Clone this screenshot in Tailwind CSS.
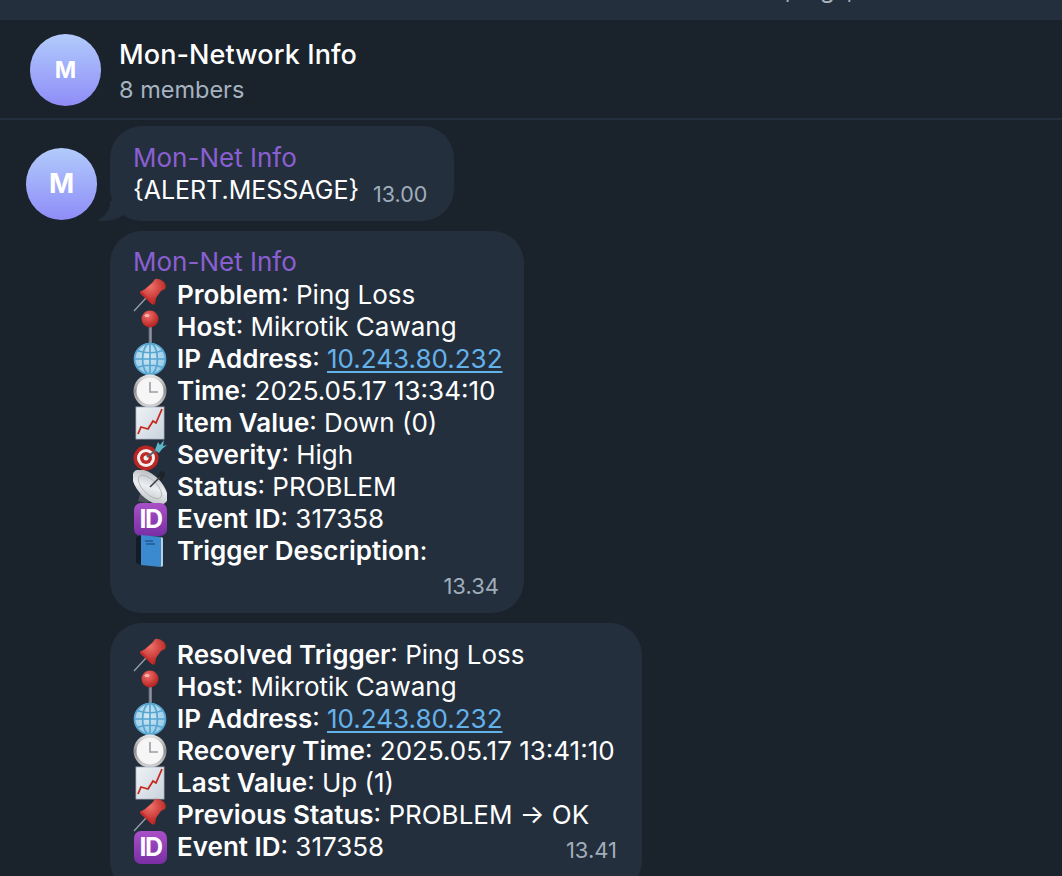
<!DOCTYPE html>
<html lang="en">
<head>
<meta charset="UTF-8" />
<title>Mon-Network Info</title>
<script src="https://cdn.jsdelivr.net/npm/@tailwindcss/browser@4"></script>
</head>
<body class="bg-[#1a222b] text-white font-['Inter',sans-serif] h-[876px] overflow-hidden">

<!-- shared emoji art -->
<svg width="0" height="0" class="absolute">
  <defs>
    <radialGradient id="red" cx="40%" cy="30%" r="70%"><stop offset="0" stop-color="#f2706a"/><stop offset="1" stop-color="#b3201f"/></radialGradient>
    <linearGradient id="steel" x1="0" x2="1"><stop offset="0" stop-color="#5f6670"/><stop offset="1" stop-color="#aab0b8"/></linearGradient>
    <radialGradient id="blue" cx="45%" cy="40%" r="65%"><stop offset="0" stop-color="#d5eaf6"/><stop offset="1" stop-color="#8cc4e4"/></radialGradient>
    <linearGradient id="rim" x1="0" x2="0" y1="0" y2="1"><stop offset="0" stop-color="#e8e8e8"/><stop offset=".5" stop-color="#8f8f8f"/><stop offset="1" stop-color="#d8d8d8"/></linearGradient>
    <linearGradient id="paper" x1="0" x2="1" y1="0" y2="1"><stop offset="0" stop-color="#eef2f6"/><stop offset="1" stop-color="#c9d3dc"/></linearGradient>
    <linearGradient id="dishg" x1="0" x2="1" y1="0" y2="1"><stop offset="0" stop-color="#a8adb3"/><stop offset=".5" stop-color="#eceef0"/><stop offset="1" stop-color="#b4b8bc"/></linearGradient>

    <symbol id="e-pushpin" viewBox="0 0 34 34">
      <path d="M1 33 L13 20" stroke="#9aa3ad" stroke-width="1.2"/>
      <path d="M7 14 L12 11 L19 5 L22 1 Q26 0 31 4 Q34 8 32 11 L28 13 L23 20 L22 26 Q21 27 19 26 L8 16 Z" fill="url(#red)"/>
      <path d="M8 16 Q6 14 8 13 L20 24 Q21 27 19 26 Z" fill="#c92d2b"/>
    </symbol>

    <symbol id="e-roundpin" viewBox="0 0 34 34">
      <rect x="15.6" y="14" width="3" height="20" fill="url(#steel)"/>
      <circle cx="17" cy="9" r="8.5" fill="url(#red)"/>
      <ellipse cx="14" cy="5.5" rx="2.6" ry="1.6" fill="#f9b6b0"/>
    </symbol>

    <symbol id="e-globe" viewBox="0 0 34 34">
      <circle cx="17" cy="17" r="16" fill="url(#blue)"/>
      <g fill="none" stroke="#55a5d0" stroke-width="1.7">
        <circle cx="17" cy="17" r="15.5"/>
        <ellipse cx="17" cy="17" rx="7.5" ry="15.5"/>
        <path d="M17 1.5V32.5M1.5 17H32.5M4 8.5Q17 13 30 8.5M4 25.5Q17 21 30 25.5"/>
      </g>
    </symbol>

    <symbol id="e-clock" viewBox="0 0 34 34">
      <circle cx="17" cy="17" r="16.5" fill="url(#rim)"/>
      <circle cx="17" cy="17" r="13.5" fill="#f6f6f6"/>
      <path d="M17 8V18H25" fill="none" stroke="#9a9ea3" stroke-width="1.6"/>
    </symbol>

    <symbol id="e-chart" viewBox="0 0 34 34">
      <rect x="3" y="1" width="28" height="32" fill="url(#paper)" stroke="#aeb8c2" stroke-width=".8"/>
      <path d="M5 28 L8 21 L15 23 L20 15 L23 17 L29 3" fill="none" stroke="#c5281f" stroke-width="1.8"/>
    </symbol>

    <symbol id="e-target" viewBox="0 0 34 34">
      <circle cx="13" cy="20" r="12.5" fill="#b92624"/>
      <circle cx="13" cy="20" r="9" fill="#f4f1ee"/>
      <circle cx="13" cy="20" r="6" fill="#c22a28"/>
      <circle cx="13" cy="20" r="2.5" fill="#f4f1ee"/>
      <path d="M14 19 L25 11" stroke="#56616b" stroke-width="2"/>
      <path d="M22 12 L25 4 L27 7 L31 2 L30 8 L34 7 L29 11 L26 15 Z" fill="#5db7c7"/>
    </symbol>

    <symbol id="e-dish" viewBox="0 0 34 34">
      <path d="M8 20 L5 31 L13 33 L22 29 L18 22 Z" fill="#4a5159"/>
      <path d="M18 16 L27 7" stroke="#3a4047" stroke-width="1.8"/>
      <path d="M24 7 L28 1 L32 2 L32 5 L28 11 Z" fill="#1f2328"/>
      <ellipse cx="17" cy="17" rx="22" ry="11.5" transform="rotate(45 17 17)" fill="url(#dishg)"/>
      <ellipse cx="17" cy="17" rx="15" ry="7" transform="rotate(45 17 17)" fill="none" stroke="#a3a8ae" stroke-width=".7"/>
      <path d="M17 17 L27 7" stroke="#3a4047" stroke-width="1.6"/>
    </symbol>

    <symbol id="e-book" viewBox="0 0 34 34">
      <path d="M3 3 L8 1 V31 L3 29 Z" fill="#141c26"/>
      <path d="M8 1 L28 3 V33 L8 31 Z" fill="#3b8ad0"/>
      <path d="M28 3 L30 4 V32 L28 33 Z" fill="#b9cfe2"/>
      <path d="M12 7H20M13 10H22" stroke="#1f5a92" stroke-width="1.3"/>
    </symbol>
  </defs>
</svg>

<!-- strip of the window above, its text cut off at the edge -->
<div class="h-5 bg-[#242f3d] overflow-hidden relative">
  <div class="absolute left-[785px] top-[-22px] flex text-[24px] leading-[24px] text-[#a9b3be]">
    <span>,</span><span class="ml-[28px]">g</span><span class="ml-[12px]">,</span>
  </div>
</div>

<!-- chat header -->
<header class="h-[100px] flex items-center pl-[30px] gap-[18px] border-b-2 border-[#242f3d]">
  <div class="w-[71px] h-[72px] mt-[2px] rounded-full bg-gradient-to-b from-[#b2cbfb] to-[#8f8cf7] flex items-center justify-center font-bold text-[23px]">M</div>
  <div class="pt-[5px]">
    <div class="text-[27px] leading-[35px] font-medium tracking-[0.1px]">Mon-Network Info</div>
    <div class="text-[23.5px] leading-[35px] text-[#a6b3c0]">8 members</div>
  </div>
</header>

<main class="pt-[6px] flex flex-col gap-[10px]">
  <!-- first message with avatar and tail -->
  <div class="flex items-end pl-[26px] gap-[13px]">
    <div class="w-[71px] h-[72px] mb-px rounded-full bg-gradient-to-b from-[#b2cbfb] to-[#8f8cf7] flex items-center justify-center font-bold text-[27px]">M</div>
    <div class="relative w-[344px] h-[95px] bg-[#242f3d] rounded-[32px] pt-[15px] pl-[23px]">
      <svg class="absolute left-[-13px] bottom-0" width="34" height="20" viewBox="0 0 34 20"><path d="M13 0 Q14 12 0 20 Q18 21 26 14 L34 0 Z" fill="#242f3d"/></svg>
      <div class="relative text-[26px] leading-[33px] text-[#8a5fd1]">Mon-Net Info</div>
      <div class="relative flex items-baseline gap-[14px] text-[25px] leading-[32px]">
        <span>{ALERT.MESSAGE}</span><span class="text-[21.5px] text-[#a0adba] translate-y-[3px]">13.00</span>
      </div>
    </div>
  </div>

  <!-- problem alert -->
  <div class="ml-[110px] w-[414px] h-[382px] bg-[#242f3d] rounded-[32px] pt-[14px] pl-[23px] text-[26px] leading-[32px]">
    <div class="text-[#8a5fd1] leading-[34px]">Mon-Net Info</div>
    <div class="flex items-center gap-[10px] h-8"><svg class="w-[34px] h-[34px] shrink-0"><use href="#e-pushpin"/></svg><p><b class="font-semibold">Problem</b>: Ping Loss</p></div>
    <div class="flex items-center gap-[10px] h-8"><svg class="w-[34px] h-[34px] shrink-0"><use href="#e-roundpin"/></svg><p><b class="font-semibold">Host</b>: Mikrotik Cawang</p></div>
    <div class="flex items-center gap-[10px] h-8"><svg class="w-[34px] h-[34px] shrink-0"><use href="#e-globe"/></svg><p><b class="font-semibold">IP Address</b>: <a class="text-[#64b2ea] underline underline-offset-[3px]">10.243.80.232</a></p></div>
    <div class="flex items-center gap-[10px] h-8"><svg class="w-[34px] h-[34px] shrink-0"><use href="#e-clock"/></svg><p><b class="font-semibold">Time</b>: 2025.05.17 13:34:10</p></div>
    <div class="flex items-center gap-[10px] h-8"><svg class="w-[34px] h-[34px] shrink-0"><use href="#e-chart"/></svg><p><b class="font-semibold">Item Value</b>: Down (0)</p></div>
    <div class="flex items-center gap-[10px] h-8"><svg class="w-[34px] h-[34px] shrink-0"><use href="#e-target"/></svg><p><b class="font-semibold">Severity</b>: High</p></div>
    <div class="flex items-center gap-[10px] h-8"><svg class="w-[34px] h-[34px] shrink-0"><use href="#e-dish"/></svg><p><b class="font-semibold">Status</b>: PROBLEM</p></div>
    <div class="flex items-center gap-[10px] h-8"><span class="w-[33px] h-[33px] ml-px shrink-0 rounded-[7px] bg-gradient-to-b from-[#a950c8] to-[#7a2ea5] flex items-center justify-center text-[25px] leading-none font-bold tracking-[-1.5px]">ID</span><p><b class="font-semibold">Event ID</b>: 317358</p></div>
    <div class="flex items-center gap-[10px] h-8"><svg class="w-[34px] h-[34px] shrink-0"><use href="#e-book"/></svg><p><b class="font-semibold">Trigger Description</b>:</p></div>
    <div class="text-right pr-[25px] text-[22px] leading-[32px] mt-[3px] text-[#a0adba]">13.34</div>
  </div>

  <!-- resolved alert -->
  <div class="ml-[110px] w-[532px] h-[270px] bg-[#242f3d] rounded-[32px] pt-[16px] pl-[23px] text-[26px] leading-[32px]">
    <div class="flex items-center gap-[10px] h-8"><svg class="w-[34px] h-[34px] shrink-0"><use href="#e-pushpin"/></svg><p><b class="font-semibold">Resolved Trigger</b>: Ping Loss</p></div>
    <div class="flex items-center gap-[10px] h-8"><svg class="w-[34px] h-[34px] shrink-0"><use href="#e-roundpin"/></svg><p><b class="font-semibold">Host</b>: Mikrotik Cawang</p></div>
    <div class="flex items-center gap-[10px] h-8"><svg class="w-[34px] h-[34px] shrink-0"><use href="#e-globe"/></svg><p><b class="font-semibold">IP Address</b>: <a class="text-[#64b2ea] underline underline-offset-[3px]">10.243.80.232</a></p></div>
    <div class="flex items-center gap-[10px] h-8"><svg class="w-[34px] h-[34px] shrink-0"><use href="#e-clock"/></svg><p><b class="font-semibold">Recovery Time</b>: 2025.05.17 13:41:10</p></div>
    <div class="flex items-center gap-[10px] h-8"><svg class="w-[34px] h-[34px] shrink-0"><use href="#e-chart"/></svg><p><b class="font-semibold">Last Value</b>: Up (1)</p></div>
    <div class="flex items-center gap-[10px] h-8"><svg class="w-[34px] h-[34px] shrink-0"><use href="#e-pushpin"/></svg><p><b class="font-semibold">Previous Status</b>: PROBLEM → OK</p></div>
    <div class="flex items-center gap-[10px] h-8"><span class="w-[33px] h-[33px] ml-px shrink-0 rounded-[7px] bg-gradient-to-b from-[#a950c8] to-[#7a2ea5] flex items-center justify-center text-[25px] leading-none font-bold tracking-[-1.5px]">ID</span><p class="flex-1 flex justify-between items-baseline pr-[25px]"><span><b class="font-semibold">Event ID</b>: 317358</span><span class="text-[22px] text-[#a0adba] translate-y-[2px]">13.41</span></p></div>
  </div>
</main>
</body>
</html>
